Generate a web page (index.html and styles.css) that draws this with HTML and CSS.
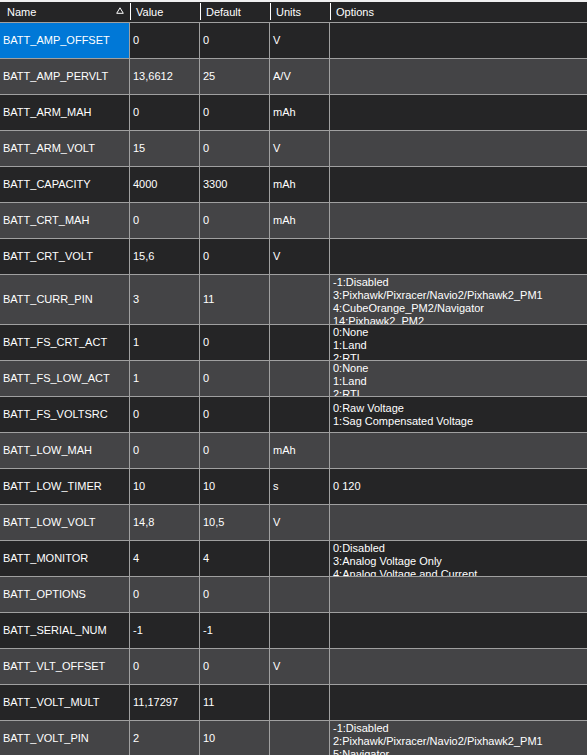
FILE: index.html
```html
<!DOCTYPE html>
<html>
<head>
<meta charset="utf-8">
<link rel="stylesheet" href="styles.css">
</head>
<body>
<div class="grid">
  <div class="head">
    <div class="hc first"><span>Name</span><svg class="sort" width="8" height="7" viewBox="0 0 8 7"><path d="M4 0.8 L7.3 6.3 L0.7 6.3 Z" fill="none" stroke="#fff" stroke-width="1"/></svg></div>
    <div class="hc">Value</div>
    <div class="hc">Default</div>
    <div class="hc">Units</div>
    <div class="hc">Options</div>
  </div>

  <div class="row dark"><div class="c sel">BATT_AMP_OFFSET</div><div class="c">0</div><div class="c">0</div><div class="c">V</div><div class="c o"></div></div>
  <div class="row light"><div class="c">BATT_AMP_PERVLT</div><div class="c">13,6612</div><div class="c">25</div><div class="c">A/V</div><div class="c o"></div></div>
  <div class="row dark"><div class="c">BATT_ARM_MAH</div><div class="c">0</div><div class="c">0</div><div class="c">mAh</div><div class="c o"></div></div>
  <div class="row light"><div class="c">BATT_ARM_VOLT</div><div class="c">15</div><div class="c">0</div><div class="c">V</div><div class="c o"></div></div>
  <div class="row dark"><div class="c">BATT_CAPACITY</div><div class="c">4000</div><div class="c">3300</div><div class="c">mAh</div><div class="c o"></div></div>
  <div class="row light"><div class="c">BATT_CRT_MAH</div><div class="c">0</div><div class="c">0</div><div class="c">mAh</div><div class="c o"></div></div>
  <div class="row dark"><div class="c">BATT_CRT_VOLT</div><div class="c">15,6</div><div class="c">0</div><div class="c">V</div><div class="c o"></div></div>
  <div class="row light tall"><div class="c">BATT_CURR_PIN</div><div class="c">3</div><div class="c">11</div><div class="c"></div><div class="c o top">-1:Disabled<br>3:Pixhawk/Pixracer/Navio2/Pixhawk2_PM1<br>4:CubeOrange_PM2/Navigator<br>14:Pixhawk2_PM2</div></div>
  <div class="row dark"><div class="c">BATT_FS_CRT_ACT</div><div class="c">1</div><div class="c">0</div><div class="c"></div><div class="c o top">0:None<br>1:Land<br>2:RTL</div></div>
  <div class="row light"><div class="c">BATT_FS_LOW_ACT</div><div class="c">1</div><div class="c">0</div><div class="c"></div><div class="c o top">0:None<br>1:Land<br>2:RTL</div></div>
  <div class="row dark"><div class="c">BATT_FS_VOLTSRC</div><div class="c">0</div><div class="c">0</div><div class="c"></div><div class="c o">0:Raw Voltage<br>1:Sag Compensated Voltage</div></div>
  <div class="row light"><div class="c">BATT_LOW_MAH</div><div class="c">0</div><div class="c">0</div><div class="c">mAh</div><div class="c o"></div></div>
  <div class="row dark"><div class="c">BATT_LOW_TIMER</div><div class="c">10</div><div class="c">10</div><div class="c">s</div><div class="c o">0 120</div></div>
  <div class="row light"><div class="c">BATT_LOW_VOLT</div><div class="c">14,8</div><div class="c">10,5</div><div class="c">V</div><div class="c o"></div></div>
  <div class="row dark"><div class="c">BATT_MONITOR</div><div class="c">4</div><div class="c">4</div><div class="c"></div><div class="c o top">0:Disabled<br>3:Analog Voltage Only<br>4:Analog Voltage and Current</div></div>
  <div class="row light"><div class="c">BATT_OPTIONS</div><div class="c">0</div><div class="c">0</div><div class="c"></div><div class="c o"></div></div>
  <div class="row dark"><div class="c">BATT_SERIAL_NUM</div><div class="c">-1</div><div class="c">-1</div><div class="c"></div><div class="c o"></div></div>
  <div class="row light"><div class="c">BATT_VLT_OFFSET</div><div class="c">0</div><div class="c">0</div><div class="c">V</div><div class="c o"></div></div>
  <div class="row dark"><div class="c">BATT_VOLT_MULT</div><div class="c">11,17297</div><div class="c">11</div><div class="c"></div><div class="c o"></div></div>
  <div class="row light"><div class="c">BATT_VOLT_PIN</div><div class="c">2</div><div class="c">10</div><div class="c"></div><div class="c o top">-1:Disabled<br>2:Pixhawk/Pixracer/Navio2/Pixhawk2_PM1<br>5:Navigator</div></div>
</div>
</body>
</html>
```

FILE: styles.css
```css
html, body {
  margin: 0;
  padding: 0;
  background: #252526;
  height: 755px;
  overflow: hidden;
}
.grid {
  width: 587px;
  font-family: "Liberation Sans", Arial, sans-serif;
  font-size: 11px;
  line-height: 13px;
  color: #ffffff;
  border-top: 2px solid #f0f0f0;
}
.head, .row {
  display: grid;
  grid-template-columns: 130px 70px 70px 60px 1fr;
}
.head {
  height: 21px;
  background: #252526;
  border-bottom: 1px solid #a0a0a0;
  box-sizing: border-box;
}
.hc {
  display: flex;
  align-items: center;
  padding-left: 6px;
  background: linear-gradient(#ffffff, #ffffff) left 0 top 1px / 1px 17px no-repeat;
}
.hc.first {
  background: none;
  padding-left: 7px;
  padding-right: 6px;
  justify-content: space-between;
}
.sort {
  display: block;
  margin-top: -3px;
}
.row {
  height: 36px;
}
.row.tall {
  height: 50px;
}
.dark { background: #252526; }
.light { background: #444446; }
.c {
  box-sizing: border-box;
  border-right: 1px solid #a0a0a0;
  border-bottom: 1px solid #a0a0a0;
  padding-left: 3px;
  display: flex;
  align-items: center;
  overflow: hidden;
  white-space: nowrap;
}
.c.o {
  border-right: none;
}
.c.o.top {
  display: block;
  padding-top: 1px;
}
.sel {
  background: #0078d7;
}
```
